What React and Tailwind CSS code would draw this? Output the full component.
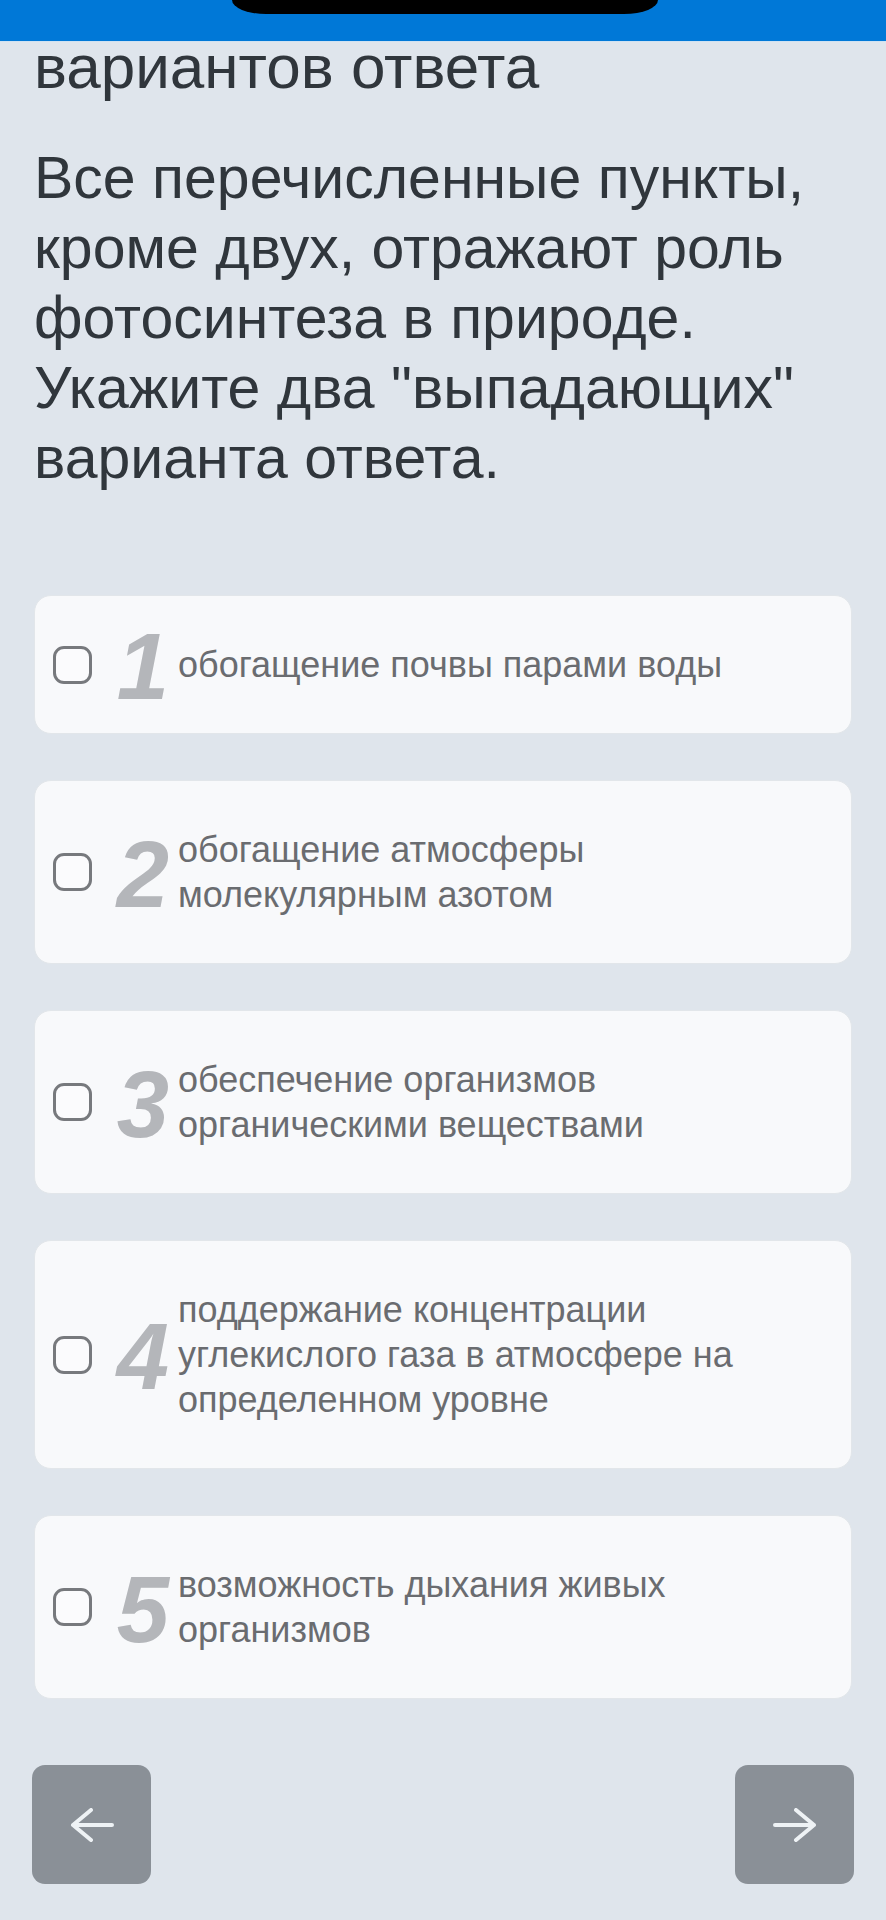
const options = [
  { id: 1, text: 'обогащение почвы парами воды' },
  { id: 2, text: 'обогащение атмосферы молекулярным азотом' },
  { id: 3, text: 'обеспечение организмов органическими веществами' },
  { id: 4, text: 'поддержание концентрации углекислого газа в атмосфере на определенном уровне' },
  { id: 5, text: 'возможность дыхания живых организмов' },
];

const Arrow = ({ flip }) => (
  <svg
    width="44"
    height="34"
    viewBox="0 0 44 34"
    fill="none"
    stroke="#eef2f5"
    strokeWidth="4"
    strokeLinecap="round"
    strokeLinejoin="round"
    className={flip ? 'rotate-180' : ''}
  >
    <path d="M21 2 L3 17 L21 32 M3 17 H42" />
  </svg>
);

const OptionCard = ({ option }) => (
  <label className="flex items-center rounded-[17px] border border-[#e2e6ea] bg-[#f8f9fb] py-[46px] pl-[18px] pr-[50px]">
    <span className="w-[39px] h-[38px] shrink-0 rounded-[11px] border-[3px] border-[#77797d] bg-[#fbfbfd]" />
    <span className="ml-[20px] w-[62px] h-[45px] shrink-0 text-center text-[94px] leading-[50px] font-bold italic text-[#b4b6ba]">
      {option.id}
    </span>
    <span className="ml-[4px] text-[36px] leading-[45px] text-[#6a6c70]">{option.text}</span>
  </label>
);

export default function App() {
  return (
    <div className="min-h-screen bg-[#dfe5ec] font-['Liberation_Sans',Arial,sans-serif] overflow-hidden">
      <header className="relative z-10 h-[42px] bg-[#0078d7] border-b border-[#cfe2f2]">
        <div className="absolute left-[232px] top-0 w-[426px] h-[14px] bg-black rounded-bl-[34px_14px] rounded-br-[34px_14px]" />
      </header>

      <main className="px-[34px]">
        <h2 className="-mt-[10px] text-[62px] leading-[70px] text-[#30363c]">вариантов ответа</h2>
        <p className="mt-[41px] text-[59px] leading-[70px] text-[#30363c]">
          Все перечисленные пункты, кроме двух, отражают роль фотосинтеза в природе. Укажите два
          "выпадающих" варианта ответа.
        </p>

        <div className="mt-[102px] flex flex-col gap-[46px]">
          {options.map((option) => (
            <OptionCard key={option.id} option={option} />
          ))}
        </div>

        <div className="-mx-[2px] mt-[66px] flex justify-between">
          <button className="w-[119px] h-[119px] rounded-[13px] bg-[#8a9097] flex items-center justify-center">
            <Arrow />
          </button>
          <button className="w-[119px] h-[119px] rounded-[13px] bg-[#8a9097] flex items-center justify-center">
            <Arrow flip />
          </button>
        </div>
      </main>
    </div>
  );
}
